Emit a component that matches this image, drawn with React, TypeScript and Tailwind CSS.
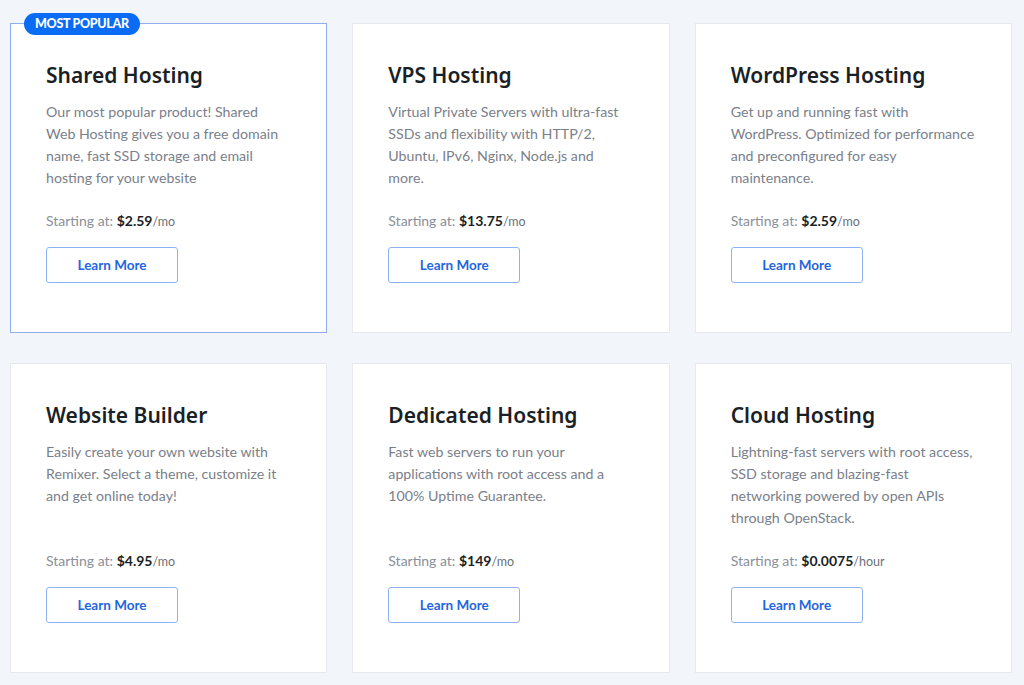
import React from "react";

type Plan = {
  title: string;
  description: string;
  price: string;
  unit: string;
  popular?: boolean;
};

const plans: Plan[] = [
  {
    title: "Shared Hosting",
    description:
      "Our most popular product! Shared Web Hosting gives you a free domain name, fast SSD storage and email hosting for your website",
    price: "$2.59",
    unit: "/mo",
    popular: true,
  },
  {
    title: "VPS Hosting",
    description:
      "Virtual Private Servers with ultra-fast SSDs and flexibility with HTTP/2, Ubuntu, IPv6, Nginx, Node.js and more.",
    price: "$13.75",
    unit: "/mo",
  },
  {
    title: "WordPress Hosting",
    description:
      "Get up and running fast with WordPress. Optimized for performance and preconfigured for easy maintenance.",
    price: "$2.59",
    unit: "/mo",
  },
  {
    title: "Website Builder",
    description:
      "Easily create your own website with Remixer. Select a theme, customize it and get online today!",
    price: "$4.95",
    unit: "/mo",
  },
  {
    title: "Dedicated Hosting",
    description:
      "Fast web servers to run your applications with root access and a 100% Uptime Guarantee.",
    price: "$149",
    unit: "/mo",
  },
  {
    title: "Cloud Hosting",
    description:
      "Lightning-fast servers with root access, SSD storage and blazing-fast networking powered by open APIs through OpenStack.",
    price: "$0.0075",
    unit: "/hour",
  },
];

function PlanCard({ plan }: { plan: Plan }) {
  return (
    <div
      className={`relative h-[310px] bg-white pl-[35px] pr-[36px] pt-[37px] ${
        plan.popular ? "border border-[#8eaef0]" : "border border-[#e6eaf0]"
      }`}
    >
      {plan.popular && (
        <div className="absolute -top-[11px] left-[13px] flex h-[22px] items-center rounded-full bg-[#0a6cf5] px-[11px] text-[12.5px] font-black uppercase tracking-tight text-white">
          Most Popular
        </div>
      )}
      <h3 className="h-[28px] whitespace-nowrap text-[21px] font-semibold leading-[28px] text-[#1b1f26] [font-family:'Noto_Sans',sans-serif]">
        {plan.title}
      </h3>
      <p className="mt-[12px] min-h-[110px] text-[14.2px] leading-[22px] text-[#7a808a]">
        {plan.description}
      </p>
      <div className="h-5 whitespace-nowrap text-[14px] leading-5 text-[#8a9099]">
        Starting at:{" "}
        <span className="font-bold text-[#1b1f26]">{plan.price}</span>
        <span className="text-[12.5px] text-[#6b717a]">{plan.unit}</span>
      </div>
      <button className="mt-4 flex h-9 w-[132px] items-center justify-center rounded-[3px] border border-[#8fb2f5] bg-white text-[13.5px] font-bold text-[#1f66e0]">
        Learn More
      </button>
    </div>
  );
}

export default function App() {
  return (
    <div className="min-h-[685px] bg-[#f2f6fa] pl-[10px] pr-[12px] pt-[23px] [font-family:Lato,sans-serif]">
      <div className="grid grid-cols-3 gap-x-[25px] gap-y-[30px]">
        {plans.map((plan) => (
          <PlanCard key={plan.title} plan={plan} />
        ))}
      </div>
    </div>
  );
}
